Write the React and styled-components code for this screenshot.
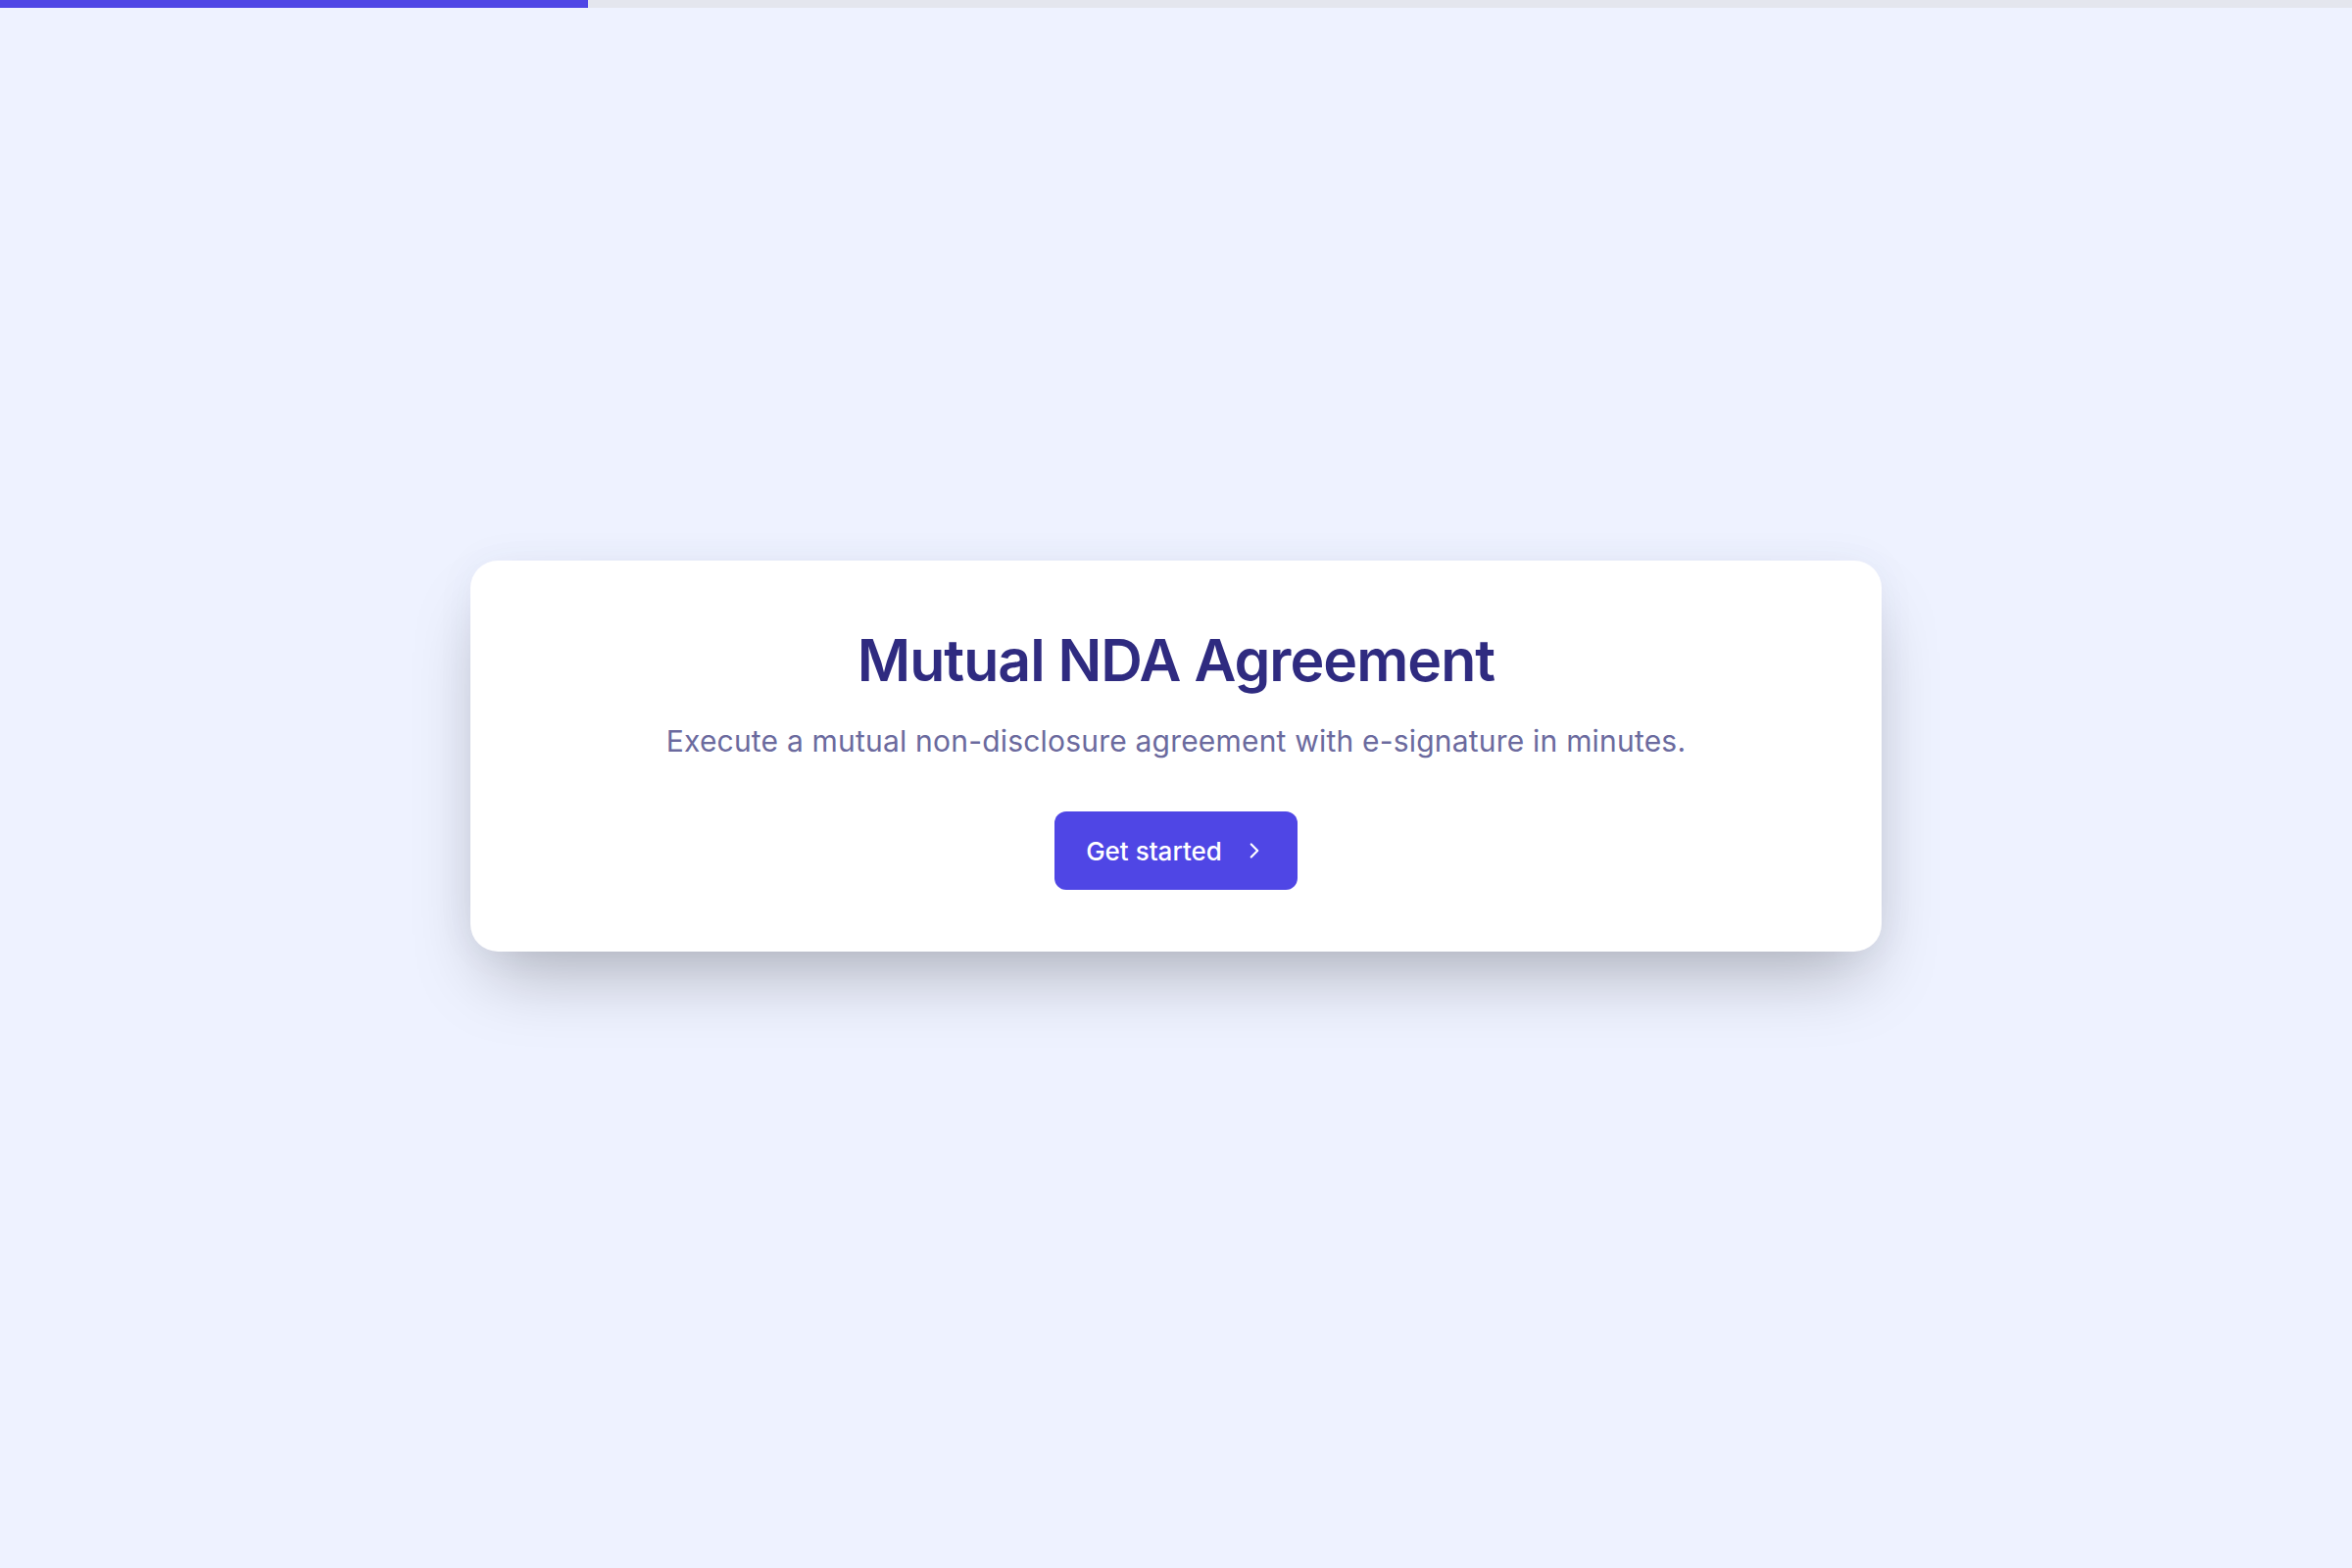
import styled, { createGlobalStyle } from 'styled-components';
import { ChevronRight } from 'lucide-react';

const GlobalStyle = createGlobalStyle`
  html, body {
    margin: 0;
    padding: 0;
    background: #eef2ff;
  }
  * {
    box-sizing: border-box;
  }
`;

function App() {
  return (
    <>
      <GlobalStyle />
      <Page>
        <ProgressTrack>
          <ProgressFill progress={25} />
        </ProgressTrack>
        <Main>
          <Card>
            <Title>Mutual NDA Agreement</Title>
            <Subtitle>Execute a mutual non-disclosure agreement with e-signature in minutes.</Subtitle>
            <StartButton type="button">
              Get started
              <ChevronRight size={26} strokeWidth={2} />
            </StartButton>
          </Card>
        </Main>
      </Page>
    </>
  );
}

const Page = styled.div`
  min-height: 100vh;
  display: flex;
  flex-direction: column;
  background: #eef2ff;
  font-family: Inter, 'Noto Sans', sans-serif;
`;

const ProgressTrack = styled.div`
  height: 8px;
  width: 100%;
  background: #e4e6ee;
`;

const ProgressFill = styled.div`
  height: 100%;
  width: ${({ progress }) => progress}%;
  background: #4f46e5;
`;

const Main = styled.main`
  flex: 1;
  display: flex;
  align-items: center;
  justify-content: center;
  padding-bottom: 65px;
`;

const Card = styled.section`
  width: 1440px;
  background: #ffffff;
  border-radius: 28px;
  padding: 70px 48px 63px;
  display: flex;
  flex-direction: column;
  align-items: center;
  box-shadow: 0 38px 75px -18px rgba(0, 0, 0, 0.27), 0 0 40px rgba(60, 70, 140, 0.05);
`;

const Title = styled.h1`
  margin: 0;
  font-size: 59px;
  line-height: 64px;
  font-weight: 600;
  letter-spacing: -1px;
  color: #2f2b80;
`;

const Subtitle = styled.p`
  margin: 30px 0 0;
  font-size: 30px;
  line-height: 40px;
  font-weight: 400;
  letter-spacing: 0.2px;
  color: #6b6a9e;
`;

const StartButton = styled.button`
  margin-top: 52px;
  height: 80px;
  padding: 0 31px 0 32px;
  display: flex;
  align-items: center;
  gap: 20px;
  border: none;
  border-radius: 12px;
  background: #4f46e5;
  color: #ffffff;
  font-family: inherit;
  font-size: 26px;
  font-weight: 500;
  cursor: pointer;
`;

export default App;
